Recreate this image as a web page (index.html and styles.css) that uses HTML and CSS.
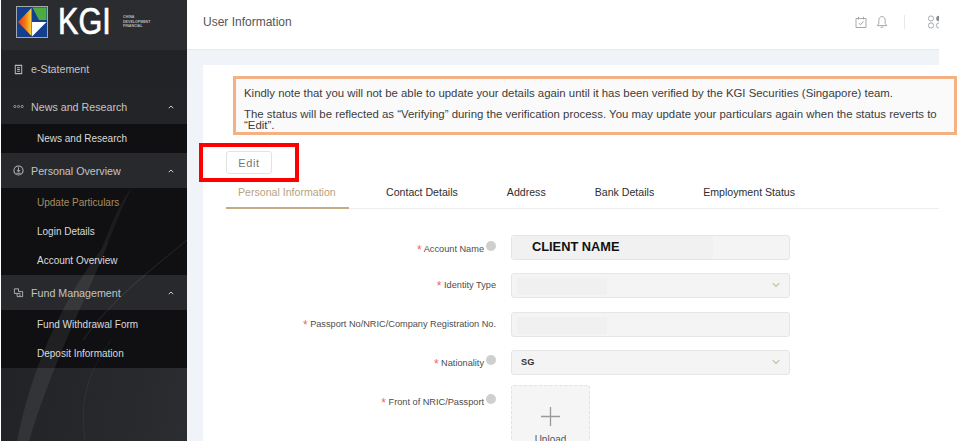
FILE: index.html
```html
<!DOCTYPE html>
<html lang="en">
<head>
<meta charset="utf-8">
<title>User Information</title>
<link rel="stylesheet" href="styles.css">
</head>
<body>
<div class="app">
  <aside class="sidebar">
    <div class="brand">
      <svg class="brand-mark" viewBox="0 0 32 32" aria-hidden="true">
        <defs>
          <linearGradient id="flame" x1="0" y1="0" x2="1" y2="0">
            <stop offset="0" stop-color="#e0391c"/>
            <stop offset=".55" stop-color="#f47a16"/>
            <stop offset="1" stop-color="#ffd83a"/>
          </linearGradient>
        </defs>
        <rect x="0.5" y="0.5" width="31" height="31" fill="#12408f" stroke="#a4a8ae"/>
        <path d="M15.5 2L2 16L15.5 30Z" fill="url(#flame)"/>
        <path d="M16.5 1.5H30.5V14H23Z" fill="#4dab3f"/>
        <path d="M16 16H30.5L16 30.5Z" fill="#fff"/>
      </svg>
      <span class="brand-name">KGI</span>
      <span class="brand-sub">CHINA<br>DEVELOPMENT<br>FINANCIAL</span>
    </div>
    <nav class="menu">
      <a class="menu-top">
        <svg class="mi" viewBox="0 0 12 12" aria-hidden="true"><path d="M2.5 1.5H9.5V10.5H2.5ZM4.5 4H7.5M4.5 6H7.5M4.5 8H7.5" fill="none" stroke="#b5b6b8" stroke-width="1.1"/></svg>
        <span>e-Statement</span>
      </a>
      <div class="menu-head">
        <svg class="mi" viewBox="0 0 12 12" aria-hidden="true"><circle cx="2" cy="6" r="1.2" fill="none" stroke="#b5b6b8" stroke-width=".8"/><circle cx="6" cy="6" r="1.2" fill="none" stroke="#b5b6b8" stroke-width=".8"/><circle cx="10" cy="6" r="1.2" fill="none" stroke="#b5b6b8" stroke-width=".8"/></svg>
        <span>News and Research</span>
        <svg class="caret" viewBox="0 0 8 5" aria-hidden="true"><path d="M1 4L4 1.2L7 4" fill="none" stroke="#d0d1d2" stroke-width="1.3"/></svg>
      </div>
      <div class="menu-sub">
        <a class="menu-item">News and Research</a>
      </div>
      <div class="menu-head">
        <svg class="mi" viewBox="0 0 12 12" aria-hidden="true"><circle cx="6" cy="6" r="5" fill="none" stroke="#b5b6b8" stroke-width="1.1"/><path d="M6 2.5V7M4.3 5.5L6 7.5L7.7 5.5M3.5 9H8.5" fill="none" stroke="#b5b6b8"/></svg>
        <span>Personal Overview</span>
        <svg class="caret" viewBox="0 0 8 5" aria-hidden="true"><path d="M1 4L4 1.2L7 4" fill="none" stroke="#d0d1d2" stroke-width="1.3"/></svg>
      </div>
      <div class="menu-sub">
        <a class="menu-item is-active">Update Particulars</a>
        <a class="menu-item">Login Details</a>
        <a class="menu-item">Account Overview</a>
      </div>
      <div class="menu-head">
        <svg class="mi" viewBox="0 0 12 12" aria-hidden="true"><path d="M1.5 2H6V5H10.5V10.5H4.5V7H1.5ZM4.5 7H8M6.5 8.8H8.5" fill="none" stroke="#b5b6b8"/></svg>
        <span>Fund Management</span>
        <svg class="caret" viewBox="0 0 8 5" aria-hidden="true"><path d="M1 4L4 1.2L7 4" fill="none" stroke="#d0d1d2" stroke-width="1.3"/></svg>
      </div>
      <div class="menu-sub">
        <a class="menu-item">Fund Withdrawal Form</a>
        <a class="menu-item">Deposit Information</a>
      </div>
    </nav>
    <svg class="sidebar-art" viewBox="0 0 186 391" preserveAspectRatio="none" aria-hidden="true">
      <path d="M16 391C30 320 62 245 108 190C90 240 56 300 28 391Z" fill="#ffffff" opacity=".07"/>
      <path d="M108 190C116 170 124 150 132 136C120 150 112 170 100 200Z" fill="#ffffff" opacity=".05"/>
      <path d="M82 290C110 250 150 220 186 190" fill="none" stroke="#fff" stroke-width="1" opacity=".1"/>
      <path d="M84 391C78 350 88 320 110 290" fill="none" stroke="#fff" stroke-width="1" opacity=".05"/>
    </svg>
  </aside>
  <div class="main">
    <header class="topbar">
      <h1 class="page-title">User Information</h1>
      <div class="top-icons">
        <svg class="ti" viewBox="0 0 12 12" aria-hidden="true"><path d="M1 2.5H11V11.5H1ZM3.5 .8V3.5M8.5 .8V3.5M3.6 7L5.5 8.8L8.5 5.3" fill="none" stroke="#9c9fa3" stroke-width=".9"/></svg>
        <svg class="ti bell" viewBox="0 0 12 12" aria-hidden="true"><path d="M6 .6C3.6 .6 2.8 2.6 2.8 4.6V7.6L1.2 9.6H10.8L9.2 7.6V4.6C9.2 2.6 8.4 .6 6 .6ZM4.6 11.2H7.4" fill="none" stroke="#9c9fa3" stroke-width=".9"/></svg>
        <span class="top-sep"></span>
        <svg class="apps" viewBox="0 0 14 14" aria-hidden="true"><circle cx="3" cy="3.5" r="2.6" fill="none" stroke="#9c9fa3" stroke-width=".9"/><circle cx="11" cy="3.5" r="2.8" fill="#85888c"/><circle cx="3" cy="10.5" r="2.6" fill="none" stroke="#9c9fa3" stroke-width=".9"/><circle cx="11" cy="10.5" r="2.6" fill="none" stroke="#9c9fa3" stroke-width=".9"/></svg>
      </div>
    </header>
    <section class="card">
      <div class="notice">
        <p class="notice-a">Kindly note that you will not be able to update your details again until it has been verified by the KGI Securities (Singapore) team.</p>
        <p class="notice-b">The status will be reflected as “Verifying” during the verification process. You may update your particulars again when the status reverts to “Edit”.</p>
      </div>
      <div class="edit-wrap">
        <button class="edit-btn" type="button">Edit</button>
      </div>
      <div class="tabs">
        <span class="tab is-active">Personal Information</span>
        <span class="tab">Contact Details</span>
        <span class="tab">Address</span>
        <span class="tab">Bank Details</span>
        <span class="tab">Employment Status</span>
      </div>
      <form class="form">
        <div class="row">
          <div class="label"><em>*</em> Account Name<i class="help"></i></div>
          <div class="field"><span class="mask mask-name"></span><b class="client">CLIENT NAME</b></div>
        </div>
        <div class="row">
          <div class="label"><em>*</em> Identity Type</div>
          <div class="field"><span class="mask mask-short"></span><svg class="chev" viewBox="0 0 8 5" aria-hidden="true"><path d="M.7 .7L4 4L7.3 .7" fill="none" stroke="#c9bda3" stroke-width="1.2"/></svg></div>
        </div>
        <div class="row">
          <div class="label"><em>*</em> Passport No/NRIC/Company Registration No.</div>
          <div class="field"><span class="mask mask-short"></span></div>
        </div>
        <div class="row">
          <div class="label"><em>*</em> Nationality<i class="help"></i></div>
          <div class="field"><span class="value">SG</span><svg class="chev" viewBox="0 0 8 5" aria-hidden="true"><path d="M.7 .7L4 4L7.3 .7" fill="none" stroke="#c9bda3" stroke-width="1.2"/></svg></div>
        </div>
        <div class="row row-upload">
          <div class="label"><em>*</em> Front of NRIC/Passport<i class="help"></i></div>
          <div class="upload">
            <svg class="plus" viewBox="0 0 19 19" aria-hidden="true"><path d="M9.5 0V19M0 9.5H19" stroke="#9a9a9a" stroke-width="1.3" fill="none"/></svg>
            <span>Upload</span>
          </div>
        </div>
      </form>
    </section>
  </div>
</div>
</body>
</html>
```
FILE: styles.css
```css
*, *::before, *::after { box-sizing: border-box; }
html, body { margin: 0; height: 100%; overflow: hidden; background: #fff; }
body { font-family: "Liberation Sans", Arial, sans-serif; color: #555; }
.app { display: flex; width: 957px; height: 441px; padding-left: 1px; overflow: hidden; }

.sidebar {
  position: relative;
  flex: 0 0 186px;
  background: linear-gradient(100deg, #1f2023 0%, #26272a 60%, #2c2d30 100%);
  color: #c9c9ca;
  font-size: 11px;
}
.sidebar-art { position: absolute; left: 0; top: 50px; width: 186px; height: 391px; pointer-events: none; }
.brand {
  display: flex;
  align-items: center;
  height: 50px;
  padding: 0 0 6px 15px;
  background: #2b2c2f;
}
.brand-mark { width: 32px; height: 32px; flex: none; }
.brand-name {
  margin-left: 10px;
  font-size: 36px;
  line-height: 32px;
  font-weight: 400;
  color: #fff;
  -webkit-text-stroke: .7px #fff;
  transform: scaleX(.85);
  transform-origin: left center;
}
.brand-sub { margin-left: 3px; font-size: 3.6px; line-height: 4.6px; color: #b8b8b8; font-weight: 700; }
.menu { display: flex; flex-direction: column; }
.menu-top, .menu-head { display: flex; align-items: center; padding-left: 12px; color: #c4c4c5; font-size: 10.7px; }
.menu-top { height: 39px; background: #222327; padding-bottom: 1px; }
.menu-head { height: 35px; background: #28292c; }
.menu-top + .menu-head { background: #232428; }
.mi { width: 11px; height: 11px; flex: none; margin-right: 7px; }
.caret { width: 6px; height: 4px; margin-left: auto; margin-right: 13px; }
.menu-sub { display: flex; flex-direction: column; background: #101012; }
.menu-item { height: 29px; line-height: 29px; padding-left: 36px; font-size: 10px; color: #dadada; }
.menu-item.is-active { color: #a98d62; }

.main { flex: 0 0 752px; display: flex; flex-direction: column; background: #f0f3f7; }
.topbar {
  flex: 0 0 50px;
  display: flex;
  align-items: center;
  justify-content: space-between;
  padding: 0 0 6px 16px;
  background: #fff;
  border-bottom: 1px solid #e6e8eb;
  overflow: hidden;
}
.page-title { margin: 0; font-size: 12px; font-weight: 400; color: #555; }
.top-icons { display: flex; align-items: center; margin-right: -3px; }
.ti { width: 12px; height: 12px; margin-right: 9px; flex: none; }
.ti.bell { margin-right: 16px; }
.top-sep { width: 1px; height: 14px; background: #e8e8e8; margin-right: 23px; }
.apps { width: 14px; height: 14px; display: block; flex: none; }

.card { flex: 1; margin: 15px 0 0 16px; background: #fff; padding: 11px 0 0 23px; }
.notice {
  width: 724px;
  margin: 0 -18px 0 7px;
  position: relative;
  height: 59px;
  padding: 7px 6px 0 8px;
  border: 3px solid #f4b183;
  background: #fafafa;
  color: #3c3c3c;
  font-size: 11.4px;
}
.notice p { margin: 0; }
.notice-a { line-height: 14px; }
.notice .notice-b { margin-top: 8.5px; line-height: 11px; }

.edit-wrap { position: relative; padding-top: 16px; height: 47px; }
.edit-wrap::before {
  content: "";
  position: absolute;
  left: -27px;
  top: 8px;
  width: 100px;
  height: 39px;
  border: 4px solid #f00;
}
.edit-btn {
  position: relative;
  display: block;
  width: 46px;
  height: 23px;
  padding: 0;
  border: 1px solid #e2e2e2;
  border-radius: 3px;
  background: #fff;
  color: #777;
  font: 400 11px "Liberation Sans", Arial, sans-serif;
  letter-spacing: .6px;
}
.tabs {
  display: flex;
  height: 27px;
  border-bottom: 1px solid #eceff2;
  font-size: 10.6px;
  color: #2e2e2e;
}
.tab { margin-right: 49px; padding-top: 4px; }
.tab.is-active {
  width: 123px;
  margin-right: 37px;
  padding-left: 12px;
  color: #b8a27e;
  border-bottom: 2px solid #c4ab84;
  height: 27px;
}
.form { display: flex; flex-direction: column; padding-top: 26px; }
.row { display: flex; align-items: center; height: 25px; margin-bottom: 13.33px; }
.label {
  flex: 0 0 285px;
  text-align: right;
  padding-right: 15px;
  font-size: 9.2px;
  line-height: 11px;
  color: #4d4d4d;
}
.label em { color: #f5616a; font-style: normal; font-size: 12px; line-height: 9px; vertical-align: -2px; }
.help {
  display: inline-block;
  width: 10px;
  height: 10px;
  border-radius: 50%;
  background: #cfcfcf;
  margin-left: 2px;
  vertical-align: 1px;
}
.field {
  position: relative;
  display: flex;
  align-items: center;
  width: 279px;
  height: 25px;
  border: 1px solid #e5e5e5;
  border-radius: 3px;
  background: #f4f4f4;
  padding: 0 9px;
  color: #444;
}
.client { position: relative; font-size: 12.8px; color: #111; margin-left: 11px; margin-bottom: 2px; }
.mask { position: absolute; left: 5px; top: 4px; height: 17px; background: #f0f0f0; }
.mask-name { left: 0; top: 0; height: 23px; width: 201px; background: #f1f1f1; }
.mask-short { width: 90px; }
.value { font-weight: 700; font-size: 9.2px; color: #333; }
.chev { position: absolute; right: 9px; top: 8px; width: 8px; height: 6px; }
.row-upload { align-items: flex-start; height: 80px; margin: -3.3px 0 0; }
.row-upload .label { padding-top: 9px; }
.upload {
  width: 79px;
  height: 80px;
  border: 1px dashed #e2e2e2;
  border-radius: 3px;
  background: #f5f5f5;
  display: flex;
  flex-direction: column;
  align-items: center;
  padding-top: 21px;
  font-size: 10px;
  color: #555;
}
.plus { width: 19px; height: 19px; margin-bottom: 8px; flex: none; }
```
